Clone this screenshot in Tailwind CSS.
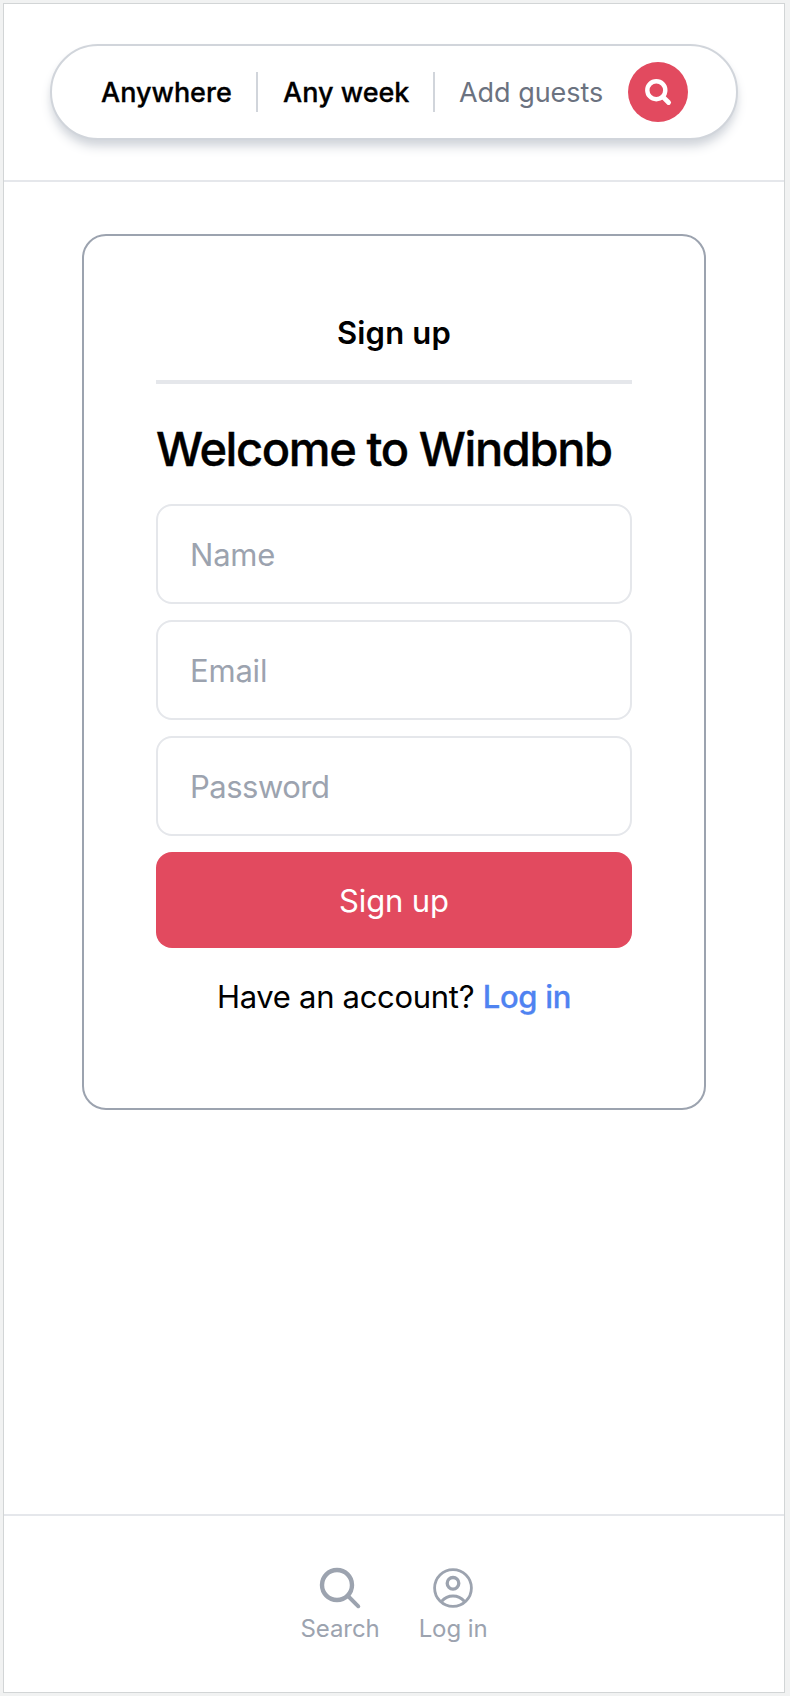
<!DOCTYPE html>
<html lang="en">
<head>
<meta charset="utf-8">
<title>Windbnb – Sign up</title>
<script src="https://cdn.jsdelivr.net/npm/@tailwindcss/browser@4"></script>
</head>
<body class="h-[1696px] overflow-hidden bg-[#f1f2f2] pt-[3px] pl-[3px] font-['Inter',sans-serif] text-black">
<div class="flex h-[1690px] w-[782px] flex-col border border-[#d2d5d6] bg-white">
  <header class="flex justify-center border-b-2 border-[#e5e7eb] py-10">
    <div class="flex h-24 w-[688px] items-center gap-6 rounded-full border-2 border-[#d1d5db] bg-white pl-12 text-[27px] leading-10 whitespace-nowrap shadow-[0_8px_12px_-2px_#d1d5db,0_4px_8px_-4px_#d1d5db]">
      <span class="w-[132px] pt-0.5 pl-px font-medium [-webkit-text-stroke:0.3px_black]">Anywhere</span>
      <span class="h-10 w-0.5 bg-[#d1d5db]"></span>
      <span class="w-[127px] pt-0.5 pl-px font-medium [-webkit-text-stroke:0.3px_black]">Any week</span>
      <span class="h-10 w-0.5 bg-[#d1d5db]"></span>
      <span class="w-[145px] pt-0.5 tracking-[-0.04px] text-[#6b7280]">Add guests</span>
      <button class="flex size-[60px] items-center justify-center rounded-full bg-[#e24a5f]" aria-label="Search">
        <svg class="size-[60px]" viewBox="0 0 60 60" fill="none" stroke="#fff" stroke-linecap="round"><circle cx="28.3" cy="28.2" r="9" stroke-width="4.4"/><path d="M35.2 35.1 40.6 40.5" stroke-width="4.8"/></svg>
      </button>
    </div>
  </header>

  <main class="flex flex-1 justify-center pt-[52px]">
    <section class="h-[876px] w-[624px] rounded-3xl border-2 border-[#9ca3af] px-[72px] pt-16 text-[31px]">
      <h2 class="h-[84px] border-b-4 border-[#e5e7eb] text-center leading-[66px] font-semibold tracking-[0.2px]">Sign up</h2>
      <h1 class="h-[120px] pt-[10px] text-[47px] leading-[110px] font-medium tracking-[-1.39px] whitespace-nowrap [-webkit-text-stroke:0.4px_black]">Welcome to Windbnb</h1>
      <form class="flex flex-col gap-4">
        <input class="h-[100px] rounded-2xl border-2 border-[#e5e7eb] px-8 tracking-[-0.2px] placeholder:text-[#9ca3af]" placeholder="Name">
        <input class="h-[100px] rounded-2xl border-2 border-[#e5e7eb] px-8 tracking-[-0.2px] placeholder:text-[#9ca3af]" placeholder="Email">
        <input type="password" class="h-[100px] rounded-2xl border-2 border-[#e5e7eb] px-8 tracking-[-0.5px] placeholder:text-[#9ca3af]" placeholder="Password">
        <button type="button" class="h-24 rounded-2xl bg-[#e24a5f] pt-0.5 tracking-[-0.13px] text-white">Sign up</button>
      </form>
      <p class="mt-[25px] text-center leading-[48px] tracking-[-0.3px] whitespace-nowrap">Have an account? <a class="font-medium text-[#4f83f1] [-webkit-text-stroke:0.3px_#4f83f1]">Log in</a></p>
    </section>
  </main>

  <nav class="flex h-[178px] justify-center gap-[39px] border-t-2 border-[#e5e7eb] pt-12 text-2xl leading-6 text-[#9ca3af]">
    <a class="flex flex-col items-center gap-[5px]">
      <svg class="size-12" viewBox="0 0 48 48" fill="none" stroke="currentColor" stroke-linecap="round"><circle cx="21" cy="21" r="15" stroke-width="4.4"/><path d="M32 32 42.3 42.3" stroke-width="3.9"/></svg>
      <span class="tracking-[-0.09px]">Search</span>
    </a>
    <a class="flex flex-col items-center gap-[5px]">
      <svg class="size-12" viewBox="0 0 48 48" fill="none" stroke="currentColor"><circle cx="24" cy="24" r="18.4" stroke-width="2.8"/><circle cx="24" cy="19.3" r="5.8" stroke-width="3.3"/><path d="M12.7 37.2A14.8 14.8 0 0 1 35.3 37.2" stroke-width="3"/></svg>
      <span class="tracking-[-0.1px]">Log in</span>
    </a>
  </nav>
</div>
</body>
</html>
